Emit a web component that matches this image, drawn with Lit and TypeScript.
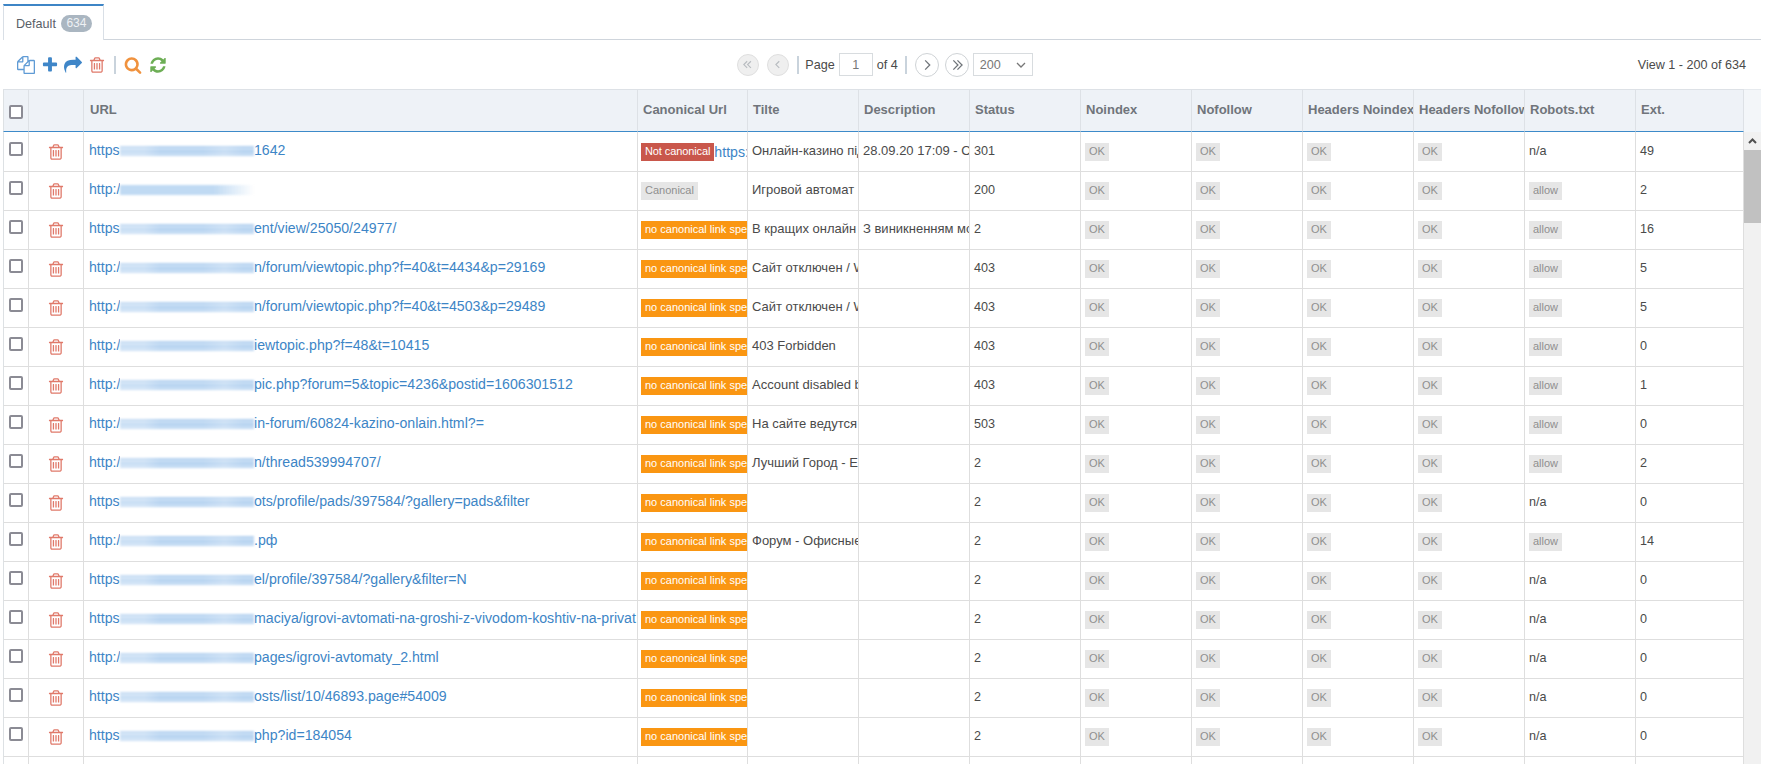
import { LitElement, html, css, svg, nothing } from 'lit';
import { customElement } from 'lit/decorators.js';

const ICONS = {
  files: 'M1696 384q40 0 68 28t28 68v1216q0 40-28 68t-68 28h-960q-40 0-68-28t-28-68v-288h-544q-40 0-68-28t-28-68v-672q0-40 20-88t48-76l408-408q28-28 76-48t88-20h416q40 0 68 28t28 68v328q68-40 128-40h416zm-544 213l-299 299h299v-299zm-640-384l-299 299h299v-299zm196 647l316-316v-416h-384v416q0 40-28 68t-68 28h-416v640h512v-256q0-40 20-96t48-88zm956 804v-1152h-384v416q0 40-28 68t-68 28h-416v640h896z',
  plus: 'M1600 736v192q0 40-28 68t-68 28h-416v416q0 40-28 68t-68 28h-192q-40 0-68-28t-28-68v-416h-416q-40 0-68-28t-28-68v-192q0-40 28-68t68-28h416v-416q0-40 28-68t68-28h192q40 0 68 28t28 68v416h416q40 0 68 28t28 68z',
  share: 'M1792 640q0 26-19 45l-512 512q-19 19-45 19t-45-19-19-45v-256h-224q-98 0-175.5 6t-154 21.5-133 42.5-105.5 69.5-80 101-48.5 138.5-17.5 181q0 55 5 123 0 6 2.5 23.5t2.5 26.5q0 15-8.5 25t-23.5 10q-16 0-28-17-7-9-13-22t-13.5-30-10.5-24q-127-285-127-451 0-199 53-333 162-403 875-403h224v-256q0-26 19-45t45-19 45 19l512 512q19 19 19 45z',
  trash: 'M704 736v576q0 14-9 23t-23 9h-64q-14 0-23-9t-9-23v-576q0-14 9-23t23-9h64q14 0 23 9t9 23zm256 0v576q0 14-9 23t-23 9h-64q-14 0-23-9t-9-23v-576q0-14 9-23t23-9h64q14 0 23 9t9 23zm256 0v576q0 14-9 23t-23 9h-64q-14 0-23-9t-9-23v-576q0-14 9-23t23-9h64q14 0 23 9t9 23zm128 724v-948h-896v948q0 22 7 40.5t14.5 27 10.5 8.5h832q3 0 10.5-8.5t14.5-27 7-40.5zm-672-1076h448l-48-117q-7-9-17-11h-317q-10 2-17 11zm928 32v64q0 14-9 23t-23 9h-96v948q0 83-47 143.5t-113 60.5h-832q-66 0-113-58.5t-47-141.5v-952h-96q-14 0-23-9t-9-23v-64q0-14 9-23t23-9h309l70-167q15-37 54-63t79-26h320q40 0 79 26t54 63l70 167h309q14 0 23 9t9 23z',
  search: 'M1216 832q0-185-131.5-316.5t-316.5-131.5-316.5 131.5-131.5 316.5 131.5 316.5 316.5 131.5 316.5-131.5 131.5-316.5zm512 832q0 52-38 90t-90 38q-54 0-90-38l-343-342q-179 124-399 124-143 0-273.5-55.5t-225-150-150-225-55.5-273.5 55.5-273.5 150-225 225-150 273.5-55.5 273.5 55.5 225 150 150 225 55.5 273.5q0 220-124 399l343 343q37 37 37 90z',
  refresh: 'M1639 1056q0 5-1 7-64 268-268 434.5t-478 166.5q-146 0-282.5-55t-243.5-157l-129 129q-19 19-45 19t-45-19-19-45v-448q0-26 19-45t45-19h448q26 0 45 19t19 45-19 45l-137 137q71 66 161 102t187 36q134 0 250-65t186-179q11-17 53-117 8-23 30-23h192q13 0 22.5 9.5t9.5 22.5zm25-800v448q0 26-19 45t-45 19h-448q-26 0-45-19t-19-45 19-45l138-138q-148-137-349-137-134 0-250 65t-186 179q-11 17-53 117-8 23-30 23h-199q-13 0-22.5-9.5t-9.5-22.5v-7q65-268 270-434.5t480-166.5q146 0 284 55.5t245 156.5l130-129q19-19 45-19t45 19 19 45z',
};

const COLS = [26, 55, 554, 110, 111, 111, 111, 111, 111, 111, 111, 111, 108];
const HEADS = ['URL', 'Canonical Url', 'Tilte', 'Description', 'Status', 'Noindex', 'Nofollow', 'Headers Noindex', 'Headers Nofollow', 'Robots.txt', 'Ext.'];

const ROWS = [
  { pre: 'https', url: '1642', canon: 'not', title: 'Онлайн-казино під ключ', desc: '28.09.20 17:09 - Онлайн', status: '301', robots: 'n/a', ext: '49' },
  { pre: 'http:/', url: '', fade: true, canon: 'ok', title: 'Игровой автомат Book', desc: '', status: '200', robots: 'allow', ext: '2' },
  { pre: 'https', url: 'ent/view/25050/24977/', canon: 'none', title: 'В кращих онлайн казино', desc: 'З виникненням мобільних', status: '2', robots: 'allow', ext: '16' },
  { pre: 'http:/', url: 'n/forum/viewtopic.php?f=40&t=4434&p=29169', canon: 'none', title: 'Сайт отключен / Website', desc: '', status: '403', robots: 'allow', ext: '5' },
  { pre: 'http:/', url: 'n/forum/viewtopic.php?f=40&t=4503&p=29489', canon: 'none', title: 'Сайт отключен / Website', desc: '', status: '403', robots: 'allow', ext: '5' },
  { pre: 'http:/', url: 'iewtopic.php?f=48&t=10415', canon: 'none', title: '403 Forbidden', desc: '', status: '403', robots: 'allow', ext: '0' },
  { pre: 'http:/', url: 'pic.php?forum=5&topic=4236&postid=1606301512', canon: 'none', title: 'Account disabled by', desc: '', status: '403', robots: 'allow', ext: '1' },
  { pre: 'http:/', url: 'in-forum/60824-kazino-onlain.html?=', canon: 'none', title: 'На сайте ведутся работы', desc: '', status: '503', robots: 'allow', ext: '0' },
  { pre: 'http:/', url: 'n/thread539994707/', canon: 'none', title: 'Лучший Город - Екатеринбург', desc: '', status: '2', robots: 'allow', ext: '2' },
  { pre: 'https', url: 'ots/profile/pads/397584/?gallery=pads&filter', canon: 'none', title: '', desc: '', status: '2', robots: 'n/a', ext: '0' },
  { pre: 'http:/', url: '.рф', canon: 'none', title: 'Форум - Офисные', desc: '', status: '2', robots: 'allow', ext: '14' },
  { pre: 'https', url: 'el/profile/397584/?gallery&filter=N', canon: 'none', title: '', desc: '', status: '2', robots: 'n/a', ext: '0' },
  { pre: 'https', url: 'maciya/igrovi-avtomati-na-groshi-z-vivodom-koshtiv-na-privat', canon: 'none', title: '', desc: '', status: '2', robots: 'n/a', ext: '0' },
  { pre: 'http:/', url: 'pages/igrovi-avtomaty_2.html', canon: 'none', title: '', desc: '', status: '2', robots: 'n/a', ext: '0' },
  { pre: 'https', url: 'osts/list/10/46893.page#54009', canon: 'none', title: '', desc: '', status: '2', robots: 'n/a', ext: '0' },
  { pre: 'https', url: 'php?id=184054', canon: 'none', title: '', desc: '', status: '2', robots: 'n/a', ext: '0' },
];

const icon = (name: keyof typeof ICONS, cls: string) => html`
  <svg class="ico ${cls}" viewBox="0 0 1792 1792">${svg`<path d=${ICONS[name]}></path>`}</svg>
`;

const pager = (points: string[]) => html`
  <svg viewBox="0 0 24 24">
    ${points.map((p) => svg`<polyline points=${p}></polyline>`)}
  </svg>
`;

@customElement('app-root')
export class AppRoot extends LitElement {
  static styles = css`
    :host {
      display: block;
      height: 764px;
      overflow: hidden;
      background: #fff;
      font-family: 'Liberation Sans', Arial, sans-serif;
      font-size: 12.6px;
      color: #4a4a4a;
    }
    .tabs {
      height: 35px;
      margin: 4px 6px 0 3px;
      border-bottom: 1px solid #cfd5dc;
    }
    .tab {
      display: inline-flex;
      align-items: center;
      gap: 5px;
      box-sizing: border-box;
      width: 101px;
      height: 36px;
      padding: 1px 0 0 12px;
      background: #fff;
      border: 1px solid #d9dfe6;
      border-top: 2px solid #3d85c6;
      border-bottom: 0;
      color: #5a6068;
    }
    .tab b {
      font-weight: normal;
      font-size: 12px;
      color: #eef1f4;
      background: #aab6c1;
      border-radius: 9px;
      padding: 0 5.5px;
      height: 17px;
      line-height: 17px;
    }
    .toolbar {
      display: grid;
      grid-template-columns: 1fr auto 1fr;
      align-items: center;
      height: 49px;
      margin-right: 21px;
    }
    .actions {
      display: flex;
      align-items: center;
      gap: 5.5px;
      padding-left: 17px;
    }
    .ico {
      display: block;
      width: 18px;
      height: 18px;
      flex: none;
    }
    .blue {
      fill: #3f86c8;
    }
    .light {
      fill: #5f9bd5;
    }
    .red {
      fill: #e0796a;
    }
    .orange {
      fill: #f0923e;
    }
    .green {
      fill: #6dae55;
      margin-left: 1.5px;
    }
    .sep {
      width: 2px;
      height: 18px;
      background: #c9d3dc;
      flex: none;
    }
    .actions .sep {
      margin: 0 2.5px 0 3px;
    }
    .pager {
      display: flex;
      align-items: center;
      margin-left: 24px;
    }
    .round {
      box-sizing: border-box;
      border-radius: 50%;
      border: 1px solid #cfd3d6;
      background: #fff;
      flex: none;
    }
    .round svg {
      display: block;
      width: 100%;
      height: 100%;
      fill: none;
      stroke: #6f7479;
      stroke-width: 1.4;
    }
    .round.off {
      width: 22px;
      height: 22px;
      margin-right: 8px;
      background: #efefef;
      border-color: #dfdfdf;
    }
    .round.off svg {
      stroke: #b8bcc0;
    }
    .round.on {
      width: 24px;
      height: 24px;
      margin-right: 6px;
    }
    .round.end {
      margin-right: 4px;
    }
    .pager span {
      white-space: nowrap;
    }
    .pager .page {
      margin-left: 6px;
    }
    .pager input {
      box-sizing: border-box;
      width: 34px;
      height: 23px;
      margin: 0 4px;
      padding: 0;
      border: 1px solid #d8dcdf;
      text-align: center;
      font: inherit;
      color: #777;
      outline: none;
    }
    .pager .sep.after {
      margin: 0 8px 0 7px;
    }
    .select {
      display: flex;
      align-items: center;
      justify-content: space-between;
      box-sizing: border-box;
      width: 60px;
      height: 23px;
      padding: 0 6px;
      border: 1px solid #d8dcdf;
      color: #777;
    }
    .select svg {
      width: 10px;
      height: 6px;
      fill: none;
      stroke: #777;
      stroke-width: 1.3;
    }
    .view {
      text-align: right;
    }
    .grid {
      display: flex;
      height: 675px;
      padding: 0 6px 0 3px;
    }
    .main {
      flex: none;
      width: 1741px;
      overflow: hidden;
    }
    table {
      table-layout: fixed;
      border-collapse: separate;
      border-spacing: 0;
      width: 1741px;
    }
    th {
      height: 43px;
      padding: 0 0 2px 5px;
      box-sizing: border-box;
      background: #eef2f7;
      border-top: 1px solid #dde1e6;
      border-right: 1px solid #dde1e6;
      border-bottom: 1px solid #3d8ac9;
      text-align: left;
      font-size: 13px;
      font-weight: bold;
      color: #70757b;
      white-space: nowrap;
      overflow: hidden;
    }
    td {
      height: 39px;
      box-sizing: border-box;
      padding: 0 0 0 4px;
      border-right: 1px solid #dedede;
      border-bottom: 1px solid #dedede;
      white-space: nowrap;
      overflow: hidden;
    }
    tbody tr:first-child td {
      height: 40px;
      padding-top: 1px;
    }
    th:first-child,
    td:first-child {
      border-left: 1px solid #dde1e4;
    }
    th.box,
    td.box {
      padding-left: 5px;
    }
    th.url-head {
      padding-left: 6px;
    }
    .check {
      display: block;
      box-sizing: border-box;
      width: 14px;
      height: 14px;
      border: 2px solid #8b8b94;
      border-radius: 2px;
      background: #fff;
    }
    th .check {
      margin-top: 4px;
    }
    td .check {
      margin-bottom: 6px;
    }
    td .ico {
      margin: 0 0 1px 14px;
    }
    .url {
      padding-bottom: 4px;
      padding-left: 5px;
    }
    .url a {
      color: #3d85c6;
      font-size: 14.15px;
      text-decoration: none;
    }
    .url i {
      display: inline-block;
      width: 31px;
      font-style: normal;
      overflow: hidden;
      vertical-align: bottom;
    }
    .smudge {
      display: inline-block;
      width: 134px;
      height: 10px;
      vertical-align: -1px;
      background:
        linear-gradient(90deg, #ffffff40 0 18%, #ffffff00 30% 62%, #ffffff38 78%, #ffffff00 92%),
        repeating-linear-gradient(180deg, #b5d2f0 0 2px, #cfe2f6 2px 3px, #bfd9f3 3px 5px);
      filter: blur(1px);
    }
    .smudge.fade {
      background: linear-gradient(90deg, #c0daf3 70%, #ffffff00 100%);
    }
    .tag {
      display: inline-block;
      height: 18px;
      line-height: 17px;
      padding: 0 4px;
      font-size: 11px;
      background: #e6e6e6;
      color: #8f8f8f;
      vertical-align: middle;
    }
    .tag.not {
      background: #c9574b;
      color: #fff;
      letter-spacing: -0.1px;
    }
    .tag.none {
      background: #fa9612;
      color: #fff;
    }
    .canon {
      padding-left: 3px;
    }
    .canon a {
      font-size: 14.15px;
      color: #3d85c6;
      text-decoration: none;
      vertical-align: middle;
    }
    .txt {
      padding-bottom: 3px;
    }
    .big {
      font-size: 13px;
    }
    .bar {
      flex: none;
      width: 17px;
      display: flex;
      flex-direction: column;
      background: #f1f1f1;
    }
    .bar-head {
      height: 43px;
      background: #f3f6f9;
      border-top: 1px solid #e6eaee;
      box-sizing: border-box;
    }
    .bar-up {
      height: 18px;
      display: flex;
      align-items: center;
      justify-content: center;
    }
    .bar-up svg {
      width: 9px;
      height: 6px;
      fill: none;
      stroke: #505050;
      stroke-width: 2;
    }
    .thumb {
      height: 73px;
      background: #c1c1c1;
    }
  `;

  renderTag(row: (typeof ROWS)[number]) {
    if (row.canon === 'not') {
      return html`<span class="tag not">Not canonical</span><a href="#">https://</a>`;
    }
    if (row.canon === 'ok') {
      return html`<span class="tag">Canonical</span>`;
    }
    return html`<span class="tag none">no canonical link specified</span>`;
  }

  renderRow(row: (typeof ROWS)[number]) {
    return html`
      <tr>
        <td class="box"><span class="check"></span></td>
        <td>${icon('trash', 'red')}</td>
        <td class="url">
          <a href="#"><i>${row.pre}</i><span class="smudge ${row.fade ? 'fade' : ''}"></span>${row.url}</a>
        </td>
        <td class="canon">${this.renderTag(row)}</td>
        <td class="txt big">${row.title}</td>
        <td class="txt big">${row.desc}</td>
        <td class="txt">${row.status}</td>
        <td><span class="tag">OK</span></td>
        <td><span class="tag">OK</span></td>
        <td><span class="tag">OK</span></td>
        <td><span class="tag">OK</span></td>
        ${row.robots === 'allow'
          ? html`<td><span class="tag">allow</span></td>`
          : html`<td class="txt">${row.robots}</td>`}
        <td class="txt">${row.ext}</td>
      </tr>
    `;
  }

  render() {
    return html`
      <div class="tabs">
        <div class="tab">Default <b>634</b></div>
      </div>
      <div class="toolbar">
        <div class="actions">
          ${icon('files', 'light')}
          ${icon('plus', 'blue')}
          ${icon('share', 'blue')}
          ${icon('trash', 'red')}
          <div class="sep"></div>
          ${icon('search', 'orange')}
          ${icon('refresh', 'green')}
        </div>
        <div class="pager">
          <div class="round off">${pager(['11,7.5 7,11.5 11,15.5', '15.5,7.5 11.5,11.5 15.5,15.5'])}</div>
          <div class="round off">${pager(['13.5,7.5 9.5,11.5 13.5,15.5'])}</div>
          <div class="sep"></div>
          <span class="page">Page</span>
          <input .value=${'1'} />
          <span>of 4</span>
          <div class="sep after"></div>
          <div class="round on">${pager(['10,7 15,12 10,17'])}</div>
          <div class="round on end">${pager(['8,7 13,12 8,17', '12.5,7 17.5,12 12.5,17'])}</div>
          <div class="select">200<svg viewBox="0 0 10 6"><polyline points="1,1 5,5 9,1"></polyline></svg></div>
        </div>
        <div class="view">View 1 - 200 of 634</div>
      </div>
      <div class="grid">
        <div class="main">
          <table>
            <colgroup>${COLS.map((w) => html`<col style="width:${w}px" />`)}</colgroup>
            <thead>
              <tr>
                <th class="box"><span class="check"></span></th>
                <th></th>
                ${HEADS.map((h, i) => html`<th class=${i === 0 ? 'url-head' : ''}>${h}</th>`)}
              </tr>
            </thead>
            <tbody>
              ${ROWS.map((r) => this.renderRow(r))}
              <tr>${COLS.map(() => html`<td>${nothing}</td>`)}</tr>
            </tbody>
          </table>
        </div>
        <div class="bar">
          <div class="bar-head"></div>
          <div class="bar-up"><svg viewBox="0 0 9 6"><polyline points="1,5 4.5,1.5 8,5"></polyline></svg></div>
          <div class="thumb"></div>
        </div>
      </div>
    `;
  }
}
